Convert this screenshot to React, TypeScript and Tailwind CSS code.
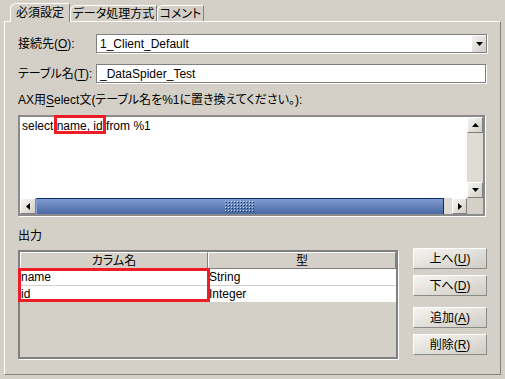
import type { ReactNode } from "react";

// underlined mnemonic letter
const Mn = ({ c }: { c: string }) => (
  <span className="underline underline-offset-[2px] decoration-1">{c}</span>
);

const Tri = ({ dir }: { dir: "up" | "down" | "left" | "right" }) => {
  const pts = {
    up: "0,4 7,4 3.5,0",
    down: "0,0 7,0 3.5,4",
    left: "4,0 4,7 0,3.5",
    right: "0,0 0,7 4,3.5",
  }[dir];
  const vertical = dir === "up" || dir === "down";
  return (
    <svg width={vertical ? 7 : 4} height={vertical ? 4 : 7} viewBox={vertical ? "0 0 7 4" : "0 0 4 7"}>
      <polygon points={pts} fill="#000" />
    </svg>
  );
};

const ScrollBtn = ({ dir, className = "" }: { dir: "up" | "down" | "left" | "right"; className?: string }) => (
  <div
    className={`flex items-center justify-center border border-t-white border-l-white border-b-[#808080] border-r-[#808080] bg-gradient-to-br from-[#f6f5f2] to-[#d2cfc7] ${className}`}
  >
    <Tri dir={dir} />
  </div>
);

const Tab = ({ children, active, className = "" }: { children: ReactNode; active?: boolean; className?: string }) => (
  <div
    className={`flex items-center justify-center rounded-tl-[6px] border-l border-t border-r border-l-white border-t-white border-r-[#808080] bg-[#d4d0c8] ${
      active ? "relative z-10 -mb-px h-[19px]" : "h-[16px] mb-0"
    } ${className}`}
  >
    {children}
  </div>
);

const Button = ({ children, className = "" }: { children: ReactNode; className?: string }) => (
  <div
    className={`flex h-[21px] items-center justify-center border border-t-white border-l-white border-b-[#8a8a8a] border-r-[#8a8a8a] bg-gradient-to-br from-[#f5f4f0] to-[#d0cdc5] ${className}`}
  >
    {children}
  </div>
);

const Grip = () => (
  <svg width="30" height="11" viewBox="0 0 30 11">
    <defs>
      <pattern id="grip" width="3" height="3" patternUnits="userSpaceOnUse">
        <rect x="0" y="0" width="1" height="1" fill="#c8d6f0" />
        <rect x="1" y="1" width="1" height="1" fill="#1d3a78" />
      </pattern>
    </defs>
    <rect width="30" height="11" fill="url(#grip)" />
  </svg>
);

export default function App() {
  return (
    <div className="relative flex h-[379px] w-[505px] flex-col overflow-hidden bg-[#d4d0c8] text-[12px] leading-[14px] text-black font-['Liberation_Sans','Noto_Sans_CJK_JP',sans-serif] [font-feature-settings:'palt']">
      {/* tabs */}
      <div className="flex h-[21px] items-end pl-[10px]">
        <Tab active className="w-[60px]">
          必須設定
        </Tab>
        <Tab className="w-[87px]">データ処理方式</Tab>
        <Tab className="w-[47px]">コメント</Tab>
      </div>

      {/* panel */}
      <div className="ml-[4px] flex h-[354px] w-[497px] flex-col border border-t-white border-l-white border-r-[#808080] border-b-[#808080] pl-[13px] pt-[12px]">
        <div className="flex h-[19px] items-center">
          <div className="w-[78px]">
            接続先(<Mn c="O" />):
          </div>
          <div className="flex h-[19px] w-[391px] border border-[#7f7f7f] bg-white shadow-[1px_1px_0_#ffffff]">
            <div className="flex flex-1 items-center pl-[3px]">1_Client_Default</div>
            <div className="flex w-[15px] items-center justify-center border-l border-t border-l-white border-t-white bg-gradient-to-br from-[#f4f3f0] to-[#cfccc4]">
              <Tri dir="down" />
            </div>
          </div>
        </div>

        <div className="mt-[11px] flex h-[19px] items-center">
          <div className="w-[78px]">
            テーブル名(<Mn c="T" />):
          </div>
          <div className="flex h-[19px] w-[390px] items-center border border-[#7f7f7f] bg-white pl-[3px] shadow-[1px_1px_0_#ffffff]">
            _DataSpider_Test
          </div>
        </div>

        <div className="mt-[10px] h-[14px]">
          AX用<Mn c="S" />elect文(テーブル名を%1に置き換えてください。):
        </div>

        {/* select statement */}
        <div className="relative mt-[8px] flex h-[101px] w-[467px] flex-col border-2 border-[#8a8a8a] shadow-[1px_1px_0_#ffffff]">
          <div className="flex flex-1">
            <div className="flex-1 bg-white pl-[2px] pt-[2px]">select name, id from %1</div>
            <div className="flex w-[16px] flex-col bg-[#dedbd4]">
              <ScrollBtn dir="up" className="h-[16px]" />
              <div className="flex-1" />
              <ScrollBtn dir="down" className="h-[16px]" />
            </div>
          </div>
          <div className="flex h-[16px]">
            <ScrollBtn dir="left" className="w-[16px]" />
            <div className="flex w-[408px] items-center justify-center border-t border-r border-l border-t-[#0b2a6b] border-r-[#0b2a6b] border-l-[#8ea8d6] bg-gradient-to-b from-[#7f9bcf] to-[#4a68a3]">
              <Grip />
            </div>
            <div className="flex-1 bg-[#dedbd4]" />
            <ScrollBtn dir="right" className="w-[15px]" />
            <div className="w-[16px] bg-[#d4d0c8]" />
          </div>
          <div className="absolute left-[34px] top-[-2px] h-[19px] w-[52px] border-[3px] border-[#ee1c24]" />
        </div>

        <div className="mt-[13px] h-[14px]">出力</div>

        {/* output table + buttons */}
        <div className="mt-[7px] flex">
          <div className="relative flex h-[109px] w-[380px] flex-col border-2 border-[#808080] shadow-[1px_1px_0_#ffffff]">
            <div className="flex h-[17px]">
              <div className="flex w-[188px] items-center justify-center border border-t-white border-l-white border-b-[#808080] border-r-[#808080]">
                カラム名
              </div>
              <div className="flex flex-1 items-center justify-center border border-t-white border-l-white border-b-[#808080] border-r-[#808080]">
                型
              </div>
            </div>
            <div className="flex h-[17px] border-b border-b-[#d4d0c8] bg-white">
              <div className="w-[188px] border-r border-r-[#d4d0c8] pl-[1px] pt-[1px]">name</div>
              <div className="flex-1 pl-[1px] pt-[1px]">String</div>
            </div>
            <div className="flex h-[16px] bg-white">
              <div className="w-[188px] border-r border-r-[#d4d0c8] pl-[1px] pt-[1px]">id</div>
              <div className="flex-1 pl-[1px] pt-[1px]">Integer</div>
            </div>
            <div className="absolute left-[-2px] top-[16px] h-[34px] w-[192px] border-[3px] border-[#ee1c24]" />
          </div>

          <div className="-mt-[2px] ml-[15px] flex w-[74px] flex-col">
            <Button>
              上へ(<Mn c="U" />)
            </Button>
            <Button className="mt-[6px]">
              下へ(<Mn c="D" />)
            </Button>
            <Button className="mt-[11px]">
              追加(<Mn c="A" />)
            </Button>
            <Button className="mt-[6px]">
              削除(<Mn c="R" />)
            </Button>
          </div>
        </div>
      </div>
    </div>
  );
}
